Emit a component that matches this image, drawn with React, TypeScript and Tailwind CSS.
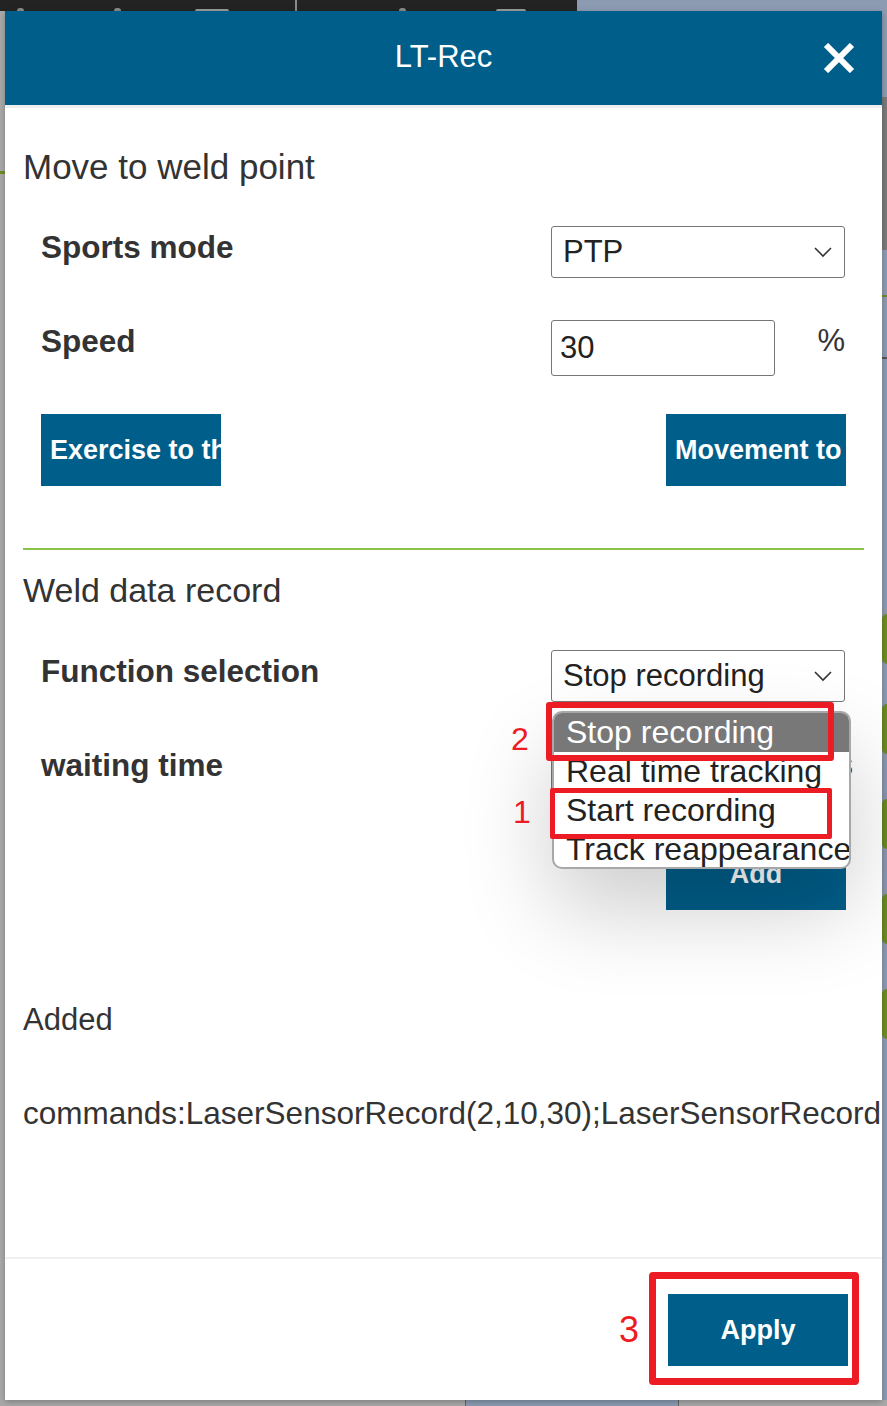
import React from 'react'

const blue = 'bg-[#005e8a]'

function Chevron() {
    return (
        <svg width="20" height="12" viewBox="0 0 20 12" className="shrink-0">
            <polyline points="2,2 10,10 18,2" fill="none" stroke="#333" strokeWidth="1.6" />
        </svg>
    )
}

function FakeSelect({ value }: { value: string }) {
    return (
        <div className="w-[294px] h-[52px] border border-[#767676] rounded-[3px] flex items-center justify-between pl-[11px] pr-[11px] bg-white">
            <span className="text-[31px] leading-[36px] text-[#222]">{value}</span>
            <Chevron />
        </div>
    )
}

function FakeInput({ value }: { value: string }) {
    return (
        <div className="w-[224px] h-[56px] border border-[#767676] rounded-[3px] flex items-center pl-[8px] bg-white">
            <span className="text-[31px] leading-[36px] text-[#222]">{value}</span>
        </div>
    )
}

function Label({ children }: { children: React.ReactNode }) {
    return <div className="pt-[3px] text-[31.5px] leading-[36px] font-bold text-[#333]">{children}</div>
}

function BlueButton({ text, center }: { text: string; center?: boolean }) {
    return (
        <div
            className={`w-[180px] h-[72px] ${blue} text-white font-bold text-[27px] leading-[72px] whitespace-nowrap overflow-hidden ${
                center ? 'text-center' : 'text-left pl-[9px]'
            }`}
        >
            {text}
        </div>
    )
}

const options = ['Stop recording', 'Real time tracking', 'Start recording', 'Track reappearance']

export default function App() {
    return (
        <div className="relative w-[887px] h-[1406px] overflow-hidden bg-[#a9a9a9] font-['Liberation_Sans',Arial,sans-serif]">
            {/* app behind the dialog */}
            <div className="flex h-[11px]">
                <div className="w-[577px] bg-[#232323] flex items-end">
                    <div className="ml-[17px] w-[7px] h-[3px] rounded-t-full bg-[#8a8a8a]" />
                    <div className="ml-[90px] w-[7px] h-[3px] rounded-t-full bg-[#8a8a8a]" />
                    <div className="ml-[74px] w-[34px] h-[2px] rounded-t bg-[#9a9a9a]" />
                    <div className="ml-[66px] w-[2px] h-[11px] bg-[#8a8a8a]" />
                    <div className="ml-[102px] w-[7px] h-[3px] rounded-t-full bg-[#8a8a8a]" />
                    <div className="ml-[90px] w-[30px] h-[2px] rounded-t bg-[#9a9a9a]" />
                </div>
                <div className="flex-1 bg-[#8c9bb2]" />
            </div>

            <div className="flex h-[1389px]">
                <div className="w-[5px] flex flex-col">
                    <div className="mt-[160px] h-[3px] bg-[#6b8e23]" />
                </div>

                {/* dialog */}
                <div className="w-[877px] bg-white flex flex-col shadow-[0_2px_6px_rgba(0,0,0,0.25)] relative z-10">
                    <div className={`h-[94px] ${blue} relative flex items-center justify-center pb-[2px]`}>
                        <span className="text-white text-[31px] leading-[36px]">LT-Rec</span>
                        <svg width="32" height="30" viewBox="0 0 32 30" className="absolute right-[27px] top-[32px]">
                            <path d="M3 2 L29 28 M29 2 L3 28" stroke="white" strokeWidth="6" />
                        </svg>
                    </div>
                    <div className="h-[3px] bg-[#eeeeee]" />

                    <div className="h-[1149px] px-[18px] flex flex-col text-[#333]">
                        <div className="mt-[39px] text-[35px] leading-[40px]">Move to weld point</div>

                        <div className="mt-[39px] flex justify-between items-start pl-[18px] pr-[19px]">
                            <Label>Sports mode</Label>
                            <FakeSelect value="PTP" />
                        </div>

                        <div className="mt-[42px] flex justify-between items-start pl-[18px] pr-[19px]">
                            <Label>Speed</Label>
                            <div className="w-[294px] flex justify-between items-start">
                                <FakeInput value="30" />
                                <span className="pt-[3px] text-[31px] leading-[36px]">%</span>
                            </div>
                        </div>

                        <div className="mt-[38px] flex justify-between pl-[18px] pr-[18px]">
                            <BlueButton text="Exercise to the point" />
                            <BlueButton text="Movement to the point" />
                        </div>

                        <div className="mt-[62px] h-[2px] bg-[#8bc34a]" />

                        <div className="mt-[20px] text-[34px] leading-[40px]">Weld data record</div>

                        <div className="mt-[40px] flex justify-between items-start pl-[18px] pr-[19px]">
                            <Label>Function selection</Label>
                            <div className="relative">
                                <FakeSelect value="Stop recording" />
                                {/* open option list */}
                                <div className="absolute left-[1px] top-[61px] w-[299px] h-[158px] z-20 bg-white border-2 border-[#a8a8a8] rounded-[10px] overflow-hidden shadow-[0_40px_90px_rgba(0,0,0,0.2)]">
                                    {options.map((o, i) => (
                                        <div
                                            key={o}
                                            className={`h-[39px] pl-[12px] text-[32px] leading-[39px] whitespace-nowrap ${
                                                i === 0 ? 'bg-[#787878] text-white' : 'text-[#222]'
                                            }`}
                                        >
                                            {o}
                                        </div>
                                    ))}
                                </div>
                            </div>
                        </div>

                        <div className="mt-[42px] flex justify-between items-start pl-[18px] pr-[19px]">
                            <Label>waiting time</Label>
                            <div className="w-[294px] flex justify-between items-start">
                                <FakeInput value="10" />
                                <span className="pt-[3px] text-[31px] leading-[36px] -mr-[8px]">ms</span>
                            </div>
                        </div>

                        <div className="mt-[38px] flex justify-end pr-[18px]">
                            <BlueButton text="Add" center />
                        </div>

                        <div className="mt-[92px] text-[31px] leading-[36px]">Added</div>

                        <div className="mt-[57px] -mr-[18px] overflow-hidden whitespace-nowrap text-[31.5px] leading-[36px]">
                            commands:LaserSensorRecord(2,10,30);LaserSensorRecord(3,10,30);
                        </div>
                    </div>

                    <div className="h-[2px] bg-[#f0f0f0]" />
                    <div className="h-[141px] flex items-center justify-end pr-[34px]">
                        <BlueButton text="Apply" center />
                    </div>
                </div>

                <div className="w-[5px] flex flex-col bg-[#8c9bb2]">
                    <div className="mt-[86px] h-[153px] bg-[#7a7a7a]" />
                    <div className="mt-[45px] h-[2px] bg-[#6b8e23]" />
                    <div className="mt-[60px] h-[2px] bg-[#555]" />
                    <div className="mt-[255px] h-[50px] bg-[#6b8e23] rounded-l-full" />
                    <div className="mt-[40px] h-[50px] bg-[#6b8e23] rounded-l-full" />
                    <div className="mt-[45px] h-[50px] bg-[#6b8e23] rounded-l-full" />
                    <div className="mt-[45px] h-[50px] bg-[#6b8e23] rounded-l-full" />
                    <div className="mt-[45px] h-[50px] bg-[#6b8e23] rounded-l-full" />
                </div>
            </div>

            <div className="flex h-[6px]">
                <div className="w-[465px]" />
                <div className="w-[214px] bg-[#8c9bb2] border-x border-[#666]" />
            </div>

            {/* red annotations */}
            <div className="absolute left-[546px] top-[702px] w-[288px] h-[59px] border-[6px] border-[#ed1c24] rounded-[3px] z-30" />
            <div className="absolute left-[550px] top-[788px] w-[282px] h-[51px] border-[5px] border-[#ed1c24] rounded-[2px] z-30" />
            <div className="absolute left-[649px] top-[1272px] w-[210px] h-[113px] border-[7px] border-[#ed1c24] rounded-[4px] z-30" />
            <span className="absolute left-[511px] top-[723px] text-[32px] leading-none text-[#ed1c24] z-30">2</span>
            <span className="absolute left-[513px] top-[796px] text-[32px] leading-none text-[#ed1c24] z-30">1</span>
            <span className="absolute left-[619px] top-[1312px] text-[36px] leading-none text-[#ed1c24] z-30">3</span>
        </div>
    )
}
